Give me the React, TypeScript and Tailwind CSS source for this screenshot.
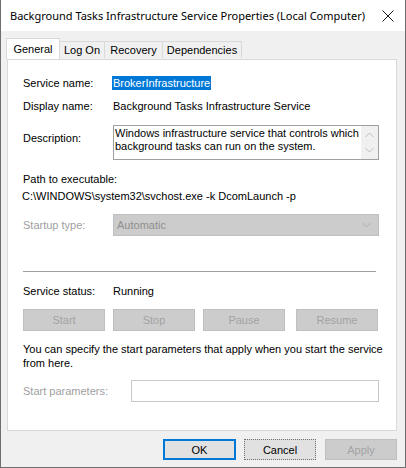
const ui = { fontFamily: '"Liberation Sans", Arial, sans-serif' };
const title = { fontFamily: '"Noto Sans", "Liberation Sans", sans-serif' };

function Chevron({ up, color }: { up?: boolean; color: string }) {
  return (
    <svg width="9" height="6" viewBox="0 0 9 6" className="block">
      <path
        d={up ? "M0.5 5 L4.5 1 L8.5 5" : "M0.5 1 L4.5 5 L8.5 1"}
        fill="none"
        stroke={color}
        strokeWidth="1"
      />
    </svg>
  );
}

function DisabledButton({ label, className }: { label: string; className?: string }) {
  return (
    <div
      className={
        "h-[22px] w-[82px] flex items-center justify-center bg-[#cccccc] border border-[#bfbfbf] text-[#a3a3a3] " +
        (className ?? "")
      }
    >
      {label}
    </div>
  );
}

function Tab({ label, active, className }: { label: string; active?: boolean; className?: string }) {
  if (active) {
    return (
      <div
        className={
          "relative z-10 h-[21px] mb-[-1px] flex justify-center pt-[3px] bg-white border border-b-0 border-[#d9d9d9] text-black " +
          (className ?? "")
        }
      >
        {label}
      </div>
    );
  }
  return (
    <div
      className={
        "h-[17px] mt-[3px] flex items-center justify-center bg-[#f0f0f0] border border-b-0 border-l-0 border-[#d9d9d9] text-black " +
        (className ?? "")
      }
    >
      {label}
    </div>
  );
}

export default function App() {
  return (
    <div
      className="w-[406px] h-[468px] bg-[#f0f0f0] border border-t-0 border-[#6e6e6e] text-[11px] leading-[14px] text-black overflow-hidden"
      style={ui}
    >
      {/* title bar */}
      <div className="h-[31px] bg-white flex items-center pl-[9px] pr-[10px]">
        <span className="text-[11px] text-black flex-1 whitespace-nowrap" style={title}>
          Background Tasks Infrastructure Service Properties (Local Computer)
        </span>
        <svg width="12" height="12" viewBox="0 0 12 12" className="mr-[1px]">
          <path d="M0.5 0.5 L11.5 11.5 M11.5 0.5 L0.5 11.5" stroke="#1a1a1a" strokeWidth="1" />
        </svg>
      </div>

      {/* tabs */}
      <div className="flex items-start pl-[5px] mt-[7px] h-[21px]">
        <Tab label="General" active className="w-[54px]" />
        <Tab label="Log On" className="w-[45px]" />
        <Tab label="Recovery" className="w-[58px]" />
        <Tab label="Dependencies" className="w-[79px]" />
      </div>

      {/* panel */}
      <div className="mx-[6px] w-[390px] h-[372px] bg-white border border-[#d9d9d9] pl-[15px] pt-[16px]">
        <div className="flex h-[14px]">
          <div className="w-[90px]">Service name:</div>
          <div className="bg-[#0078d7] text-white px-[1px] ml-[-1px]">BrokerInfrastructure</div>
        </div>

        <div className="flex h-[14px] mt-[9px]">
          <div className="w-[90px]">Display name:</div>
          <div>Background Tasks Infrastructure Service</div>
        </div>

        <div className="flex mt-[12px]">
          <div className="w-[90px] pt-[6px]">Description:</div>
          <div className="w-[266px] h-[35px] border border-[#a0a0a0] flex">
            <div className="flex-1 pl-[1px] pt-[1px] leading-[13px]">
              Windows infrastructure service that controls which background tasks can run on the system.
            </div>
            <div className="w-[17px] bg-[#f0f0f0] flex flex-col items-center justify-between py-[6px]">
              <Chevron up color="#bdbdbd" />
              <Chevron color="#bdbdbd" />
            </div>
          </div>
        </div>

        <div className="mt-[12px] h-[14px]">Path to executable:</div>
        <div className="mt-[3px] h-[14px] ml-[-1px]">C:\WINDOWS\system32\svchost.exe -k DcomLaunch -p</div>

        <div className="flex items-center mt-[11px]">
          <div className="w-[90px] text-[#a0a0a0]">Startup type:</div>
          <div className="w-[266px] h-[22px] bg-[#cccccc] border border-[#bfbfbf] flex items-center pl-[3px] pr-[7px] text-[#8f8f8f]">
            <span className="flex-1">Automatic</span>
            <Chevron color="#b0b0b0" />
          </div>
        </div>

        <div className="mt-[35px] w-[353px] h-px bg-[#a0a0a0]" />

        <div className="flex h-[14px] mt-[12px]">
          <div className="w-[90px]">Service status:</div>
          <div>Running</div>
        </div>

        <div className="flex mt-[11px]">
          <DisabledButton label="Start" />
          <DisabledButton label="Stop" className="ml-[8px]" />
          <DisabledButton label="Pause" className="ml-[8px]" />
          <DisabledButton label="Resume" className="ml-[11px]" />
        </div>

        <div className="mt-[11px] w-[360px]">
          You can specify the start parameters that apply when you start the service from here.
        </div>

        <div className="flex items-center mt-[10px]">
          <div className="w-[108px] text-[#a0a0a0]">Start parameters:</div>
          <div className="w-[248px] h-[22px] bg-white border border-[#c8c8c8]" />
        </div>
      </div>

      {/* dialog buttons */}
      <div className="flex mt-[8px] pl-[162px]">
        <div className="w-[73px] h-[21px] bg-[#e1e1e1] border-2 border-[#0078d7] flex items-center justify-center">
          OK
        </div>
        <div className="ml-[8px] w-[72px] h-[21px] bg-[#e1e1e1] border border-dotted border-[#6f6f6f] flex items-center justify-center">
          Cancel
        </div>
        <div className="ml-[9px] w-[72px] h-[21px] bg-[#cccccc] border border-[#bfbfbf] text-[#a3a3a3] flex items-center justify-center">
          Apply
        </div>
      </div>
    </div>
  );
}
